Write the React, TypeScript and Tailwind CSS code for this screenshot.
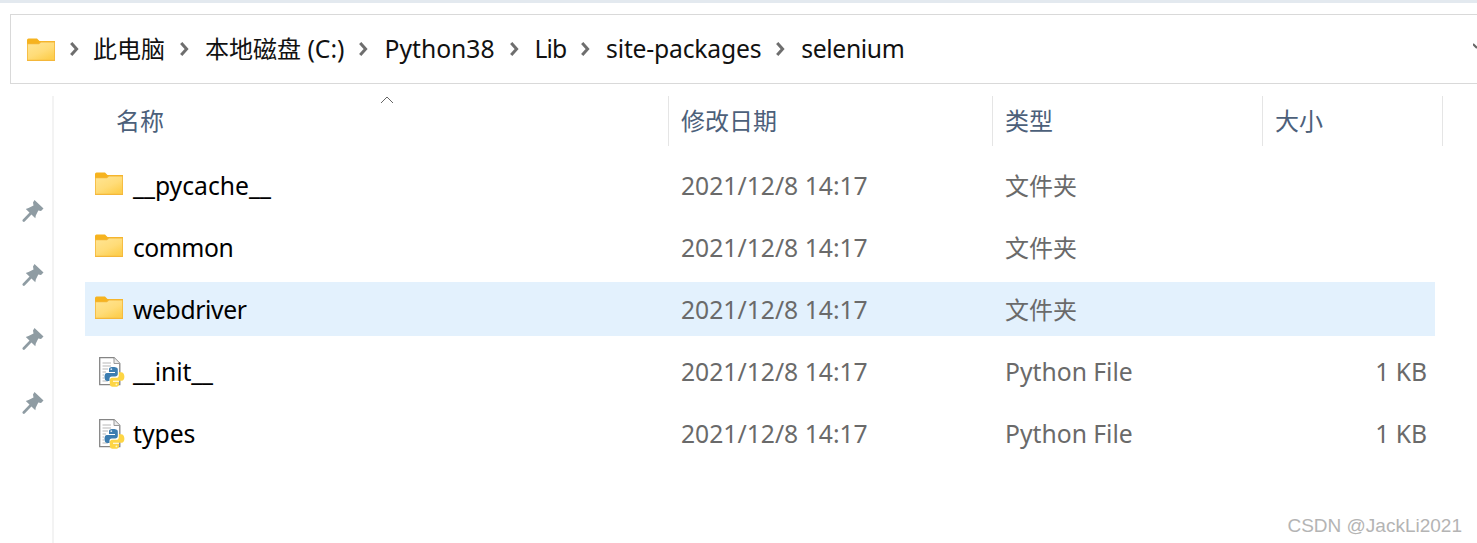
import React from "react";

const FONT = { fontFamily: '"Noto Sans", "Noto Sans CJK SC", sans-serif' };

function Folder({ id }: { id: string }) {
  return (
    <svg width="28" height="23" viewBox="0 0 28 23" className="shrink-0">
      <defs>
        <linearGradient id={id} x1="0" y1="0" x2="0.7" y2="1">
          <stop offset="0" stopColor="#ffe594" />
          <stop offset="0.6" stopColor="#ffdc78" />
          <stop offset="1" stopColor="#fdcf50" />
        </linearGradient>
      </defs>
      <path d="M0 2 Q0 0.5 1.5 0.5 H10 L12.5 3 H28 V7 H0 Z" fill="#f6b31f" />
      <path d="M0 5.5 H11.5 L13.5 3.5 H28 V23 H0 Z" fill="#f4b73a" />
      <path d="M0.8 6.3 H12 L14 4.4 H27.2 V21.8 H0.8 Z" fill={`url(#${id})`} />
    </svg>
  );
}

function PyFile() {
  return (
    <svg width="26" height="31" viewBox="0 0 26 31" className="shrink-0">
      <path d="M0.7 0.7 H15 L20.8 6.5 V27.6 H0.7 Z" fill="#fff" stroke="#858585" strokeWidth="1.3" />
      <path d="M15 0.7 V6.5 H20.8" fill="#ececec" stroke="#9a9a9a" strokeWidth="1" />
      <path d="M3.5 6 H12 M3.5 9 H12 M3.5 12 H9 M3.5 15 H7 M3.5 18 H5 M3.5 21 H5 M3.5 24 H9" stroke="#b8b8b8" strokeWidth="1.2" />
      <path d="M14 10 C10.5 10 10 11.2 10 12.5 V15 H16 V16 H8 C6 16 5.5 18 5.5 20 C5.5 22.5 6.5 24 8.5 24 H10.5 V21.5 C10.5 20.2 11.5 19.5 12.8 19.5 H16.2 C17.8 19.5 18.8 18.5 18.8 17 V12.5 C18.8 11 17.8 10 14 10 Z" fill="#3c7db0" />
      <circle cx="12.3" cy="12.2" r="0.9" fill="#d5e4f0" />
      <path d="M15.5 29.8 C19.2 29.8 20 28.6 20 27.2 V24.8 H14 V23.8 H22.5 C24.6 23.8 25.4 21.8 25.4 19.8 C25.4 17.2 24.2 15.2 22 15.2 H19.8 V18.2 C19.8 19.8 18.8 20.8 17.2 20.8 H13.2 C11.8 20.8 10.8 21.8 10.8 23.2 V27.2 C10.8 28.8 12 29.8 15.5 29.8 Z" fill="#fdd544" />
      <circle cx="17.4" cy="27.4" r="0.9" fill="#fff5c8" />
    </svg>
  );
}

function Pin() {
  return (
    <svg width="22" height="22" viewBox="0 0 22 22" className="block">
      <path d="M12.5 0 L21.5 8.5 L19 11 L16.3 10.5 L13.8 15.5 L13.3 18.2 L3.8 9 L6.5 8 L11.5 5.5 L11 2.5 Z" fill="#8f9ca3" />
      <path d="M8.5 13.5 L1.8 20.5" stroke="#8f9ca3" strokeWidth="2.6" strokeLinecap="round" />
    </svg>
  );
}

function Chevron() {
  return (
    <svg width="9" height="14" viewBox="0 0 9 14" className="shrink-0">
      <path d="M1.2 1 L6.6 7 L1.2 13" fill="none" stroke="#6e6e6e" strokeWidth="3" />
    </svg>
  );
}

const LATIN = "text-[24.7px]";
const CJK = "text-[24px]";

const rows = [
  { name: "__pycache__", type: "文件夹", size: "", icon: "f1", track: "" },
  { name: "common", type: "文件夹", size: "", icon: "f2", track: "tracking-[-0.5px]" },
  { name: "webdriver", type: "文件夹", size: "", icon: "f3", sel: true, track: "tracking-[-0.37px]" },
  { name: "__init__", type: "Python File", size: "1 KB", icon: "py", track: "tracking-[-0.1px]" },
  { name: "types", type: "Python File", size: "1 KB", icon: "py", track: "" },
];

function Crumb({ first, children }: { first?: boolean; children: React.ReactNode }) {
  return (
    <div className="flex items-center">
      <span className="ml-[15px] flex"><Chevron /></span>
      <span className={`${first ? "ml-[14px]" : "ml-[16px]"} whitespace-nowrap leading-none`}>{children}</span>
    </div>
  );
}

export default function App() {
  return (
    <div style={FONT} className="relative w-[1477px] h-[543px] overflow-hidden bg-white flex flex-col">
      <div className="h-[3px] bg-[#e3e9ef]" />
      <div className="mt-[11px] ml-[10px] w-[1480px] h-[70px] shrink-0 border border-r-0 border-[#d9d9d9] flex items-center pl-[16px] text-[#111]">
        <Folder id="a0" />
        <Crumb first><span className={CJK}>此电脑</span></Crumb>
        <Crumb><span className={CJK}>本地磁盘</span><span className={LATIN}> (C:)</span></Crumb>
        <Crumb><span className={LATIN}>Python38</span></Crumb>
        <Crumb><span className={`${LATIN} tracking-[-1px]`}>Lib</span></Crumb>
        <Crumb><span className={`${LATIN} tracking-[-0.2px]`}>site-packages</span></Crumb>
        <Crumb><span className={`${LATIN} tracking-[-0.37px]`}>selenium</span></Crumb>
      </div>
      <div className="flex mt-[12px] flex-1 min-h-0">
        <div className="w-[54px] shrink-0 border-r-2 border-[#f3f3f3] flex flex-col items-center pt-[104px] pl-[14px] gap-[42px]">
          <Pin /><Pin /><Pin /><Pin />
        </div>
        <div className="flex-1 min-w-0 pl-[31px] pr-[42px]">
          <div className="relative h-[50px] flex text-[24px] text-[#4c607a]">
            <div className="w-[583px] shrink-0 pl-[31px] flex items-center">名称</div>
            <div className="w-[324px] shrink-0 pl-[12px] border-l border-[#e5e5e5] flex items-center">修改日期</div>
            <div className="w-[270px] shrink-0 pl-[12px] border-l border-[#e5e5e5] flex items-center">类型</div>
            <div className="w-[181px] shrink-0 pl-[12px] border-x border-[#e5e5e5] flex items-center">大小</div>
            <svg width="14" height="8" viewBox="0 0 14 8" className="absolute left-[295px] top-0">
              <path d="M1 7 L7 1 L13 7" fill="none" stroke="#666" strokeWidth="1" />
            </svg>
          </div>
          <div className="mt-[12px] flex flex-col gap-[8px]">
            {rows.map((r) => (
              <div key={r.name} className={`h-[54px] pt-[2px] flex items-center leading-[38px] ${LATIN} ${r.sel ? "bg-[#e3f1fd]" : ""}`}>
                <div className="w-[584px] shrink-0 flex items-center text-black">
                  {r.icon === "py" ? (
                    <span className="ml-[14px] mr-[8px] flex"><PyFile /></span>
                  ) : (
                    <span className="ml-[10px] mr-[10px] mb-[5px] flex"><Folder id={r.icon} /></span>
                  )}
                  <span className={r.track}>{r.name}</span>
                </div>
                <div className="w-[324px] shrink-0 pl-[12px] text-[#6a6a6a]">2021/12/8 14:17</div>
                <div className={`w-[258px] shrink-0 pl-[12px] text-[#6a6a6a] ${r.type === "文件夹" ? CJK : LATIN}`}>{r.type}</div>
                <div className="w-[184px] shrink-0 pr-[8px] text-right text-[#6a6a6a]">{r.size}</div>
              </div>
            ))}
          </div>
        </div>
      </div>
      <svg width="6" height="8" viewBox="0 0 6 8" className="absolute left-[1473px] top-[43px]">
        <path d="M0 1 L4 5" stroke="#666" strokeWidth="2" />
      </svg>
      <div style={{ fontFamily: '"Liberation Sans", sans-serif' }} className="absolute right-[15px] top-[515px] text-[19px] leading-[22px] text-[#b4b4b4] whitespace-nowrap">
        CSDN @JackLi2021
      </div>
    </div>
  );
}
